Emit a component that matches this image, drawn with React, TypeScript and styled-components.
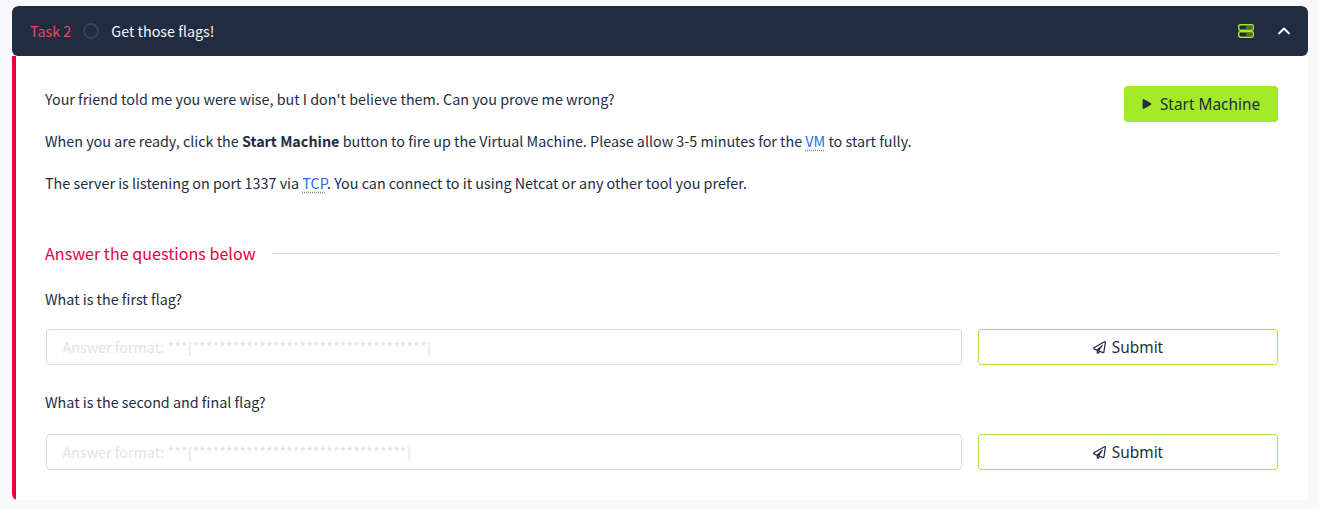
import React from 'react';
import styled, { createGlobalStyle } from 'styled-components';
import { FaPlay, FaRegPaperPlane } from 'react-icons/fa';
import { ChevronUp } from 'lucide-react';

const textFont = '"Noto Sans CJK JP", "Noto Sans", sans-serif';
const buttonFont = '"Noto Sans", "Open Sans", sans-serif';

const GlobalStyle = createGlobalStyle`
  html, body {
    margin: 0;
    background: #f9f9fb;
    font-family: ${textFont};
    color: #212c42;
  }
  * { box-sizing: border-box; }
`;

const questions = [
  { label: 'What is the first flag?', placeholder: 'Answer format: ***{***********************************}' },
  { label: 'What is the second and final flag?', placeholder: 'Answer format: ***{********************************}' },
];

export default function App() {
  return (
    <>
      <GlobalStyle />
      <Page>
        <Card>
          <Header>
            <TaskNo>Task 2</TaskNo>
            <StatusRing />
            <TaskTitle>Get those flags!</TaskTitle>
            <HeaderIcons>
              <ServerIcon />
              <ChevronUp size={20} color="#fff" strokeWidth={2.2} />
            </HeaderIcons>
          </Header>
          <Body>
            <Intro>
              <StartButton>
                <FaPlay size={10} />
                Start Machine
              </StartButton>
              <Para>Your friend told me you were wise, but I don't believe them. Can you prove me wrong?</Para>
              <Para>
                When you are ready, click the <strong>Start Machine</strong> button to fire up the Virtual Machine. Please allow 3-5 minutes for the <Abbr>VM</Abbr> to start fully.
              </Para>
              <Para>
                The server is listening on port 1337 via <Abbr>TCP</Abbr>. You can connect to it using Netcat or any other tool you prefer.
              </Para>
            </Intro>
            <SectionHead>
              <SectionTitle>Answer the questions below</SectionTitle>
              <SectionRule />
            </SectionHead>
            {questions.map((q) => (
              <Question key={q.label}>
                <QuestionLabel>{q.label}</QuestionLabel>
                <AnswerRow>
                  <AnswerInput placeholder={q.placeholder} />
                  <SubmitButton>
                    <FaRegPaperPlane size={13} />
                    Submit
                  </SubmitButton>
                </AnswerRow>
              </Question>
            ))}
          </Body>
        </Card>
      </Page>
    </>
  );
}

function ServerIcon() {
  return (
    <svg width="16" height="14" viewBox="0 0 16 14" fill="none">
      <rect x="0.7" y="0.7" width="14.6" height="5.6" rx="1.5" fill="#212c42" stroke="#a3ea2a" strokeWidth="1.4" />
      <rect x="8" y="2" width="6" height="3" fill="#566b3a" />
      <rect x="0.7" y="7.7" width="14.6" height="5.6" rx="1.5" fill="#212c42" stroke="#a3ea2a" strokeWidth="1.4" />
      <rect x="8" y="9" width="6" height="3" fill="#566b3a" />
    </svg>
  );
}

const Page = styled.div`
  padding: 6px 11px 9px 12px;
`;

const Card = styled.div`
  background: #fff;
  border-radius: 6px;
  height: 494px;
  display: flex;
  flex-direction: column;
  overflow: hidden;
`;

const Header = styled.div`
  height: 50px;
  background: #212c42;
  border-radius: 6px;
  display: flex;
  align-items: center;
  padding: 0 14px 0 18px;
  font-size: 14.34px;
  line-height: 48px;
  flex: none;
`;

const TaskNo = styled.span`
  color: #e84a5f;
`;

const StatusRing = styled.span`
  width: 16px;
  height: 16px;
  border-radius: 50%;
  border: 2px solid #36435a;
  margin: 0 12px;
`;

const TaskTitle = styled.span`
  color: #f5f7fb;
`;

const HeaderIcons = styled.div`
  margin-left: auto;
  display: flex;
  align-items: center;
  gap: 20px;
`;

const Body = styled.div`
  flex: 1;
  border-left: 4px solid #e8003c;
  padding: 30px 30px 0 29px;
  font-size: 14.34px;
`;

const Intro = styled.div`
  height: 130px;
  padding-top: 1px;
`;

const Para = styled.p`
  margin: 0 0 18px;
  line-height: 24px;
`;

const Abbr = styled.span`
  color: #2a6ae8;
  text-decoration: underline dotted #7a8aa5;
  text-underline-offset: 3px;
`;

const StartButton = styled.button`
  float: right;
  margin-top: -1px;
  width: 154px;
  height: 36px;
  background: #a3ea2a;
  border: 0;
  border-radius: 4px;
  display: flex;
  align-items: center;
  justify-content: center;
  gap: 8px;
  font-family: ${buttonFont};
  font-size: 15.4px;
  color: #212c42;
`;

const SectionHead = styled.div`
  display: flex;
  align-items: center;
  gap: 16px;
  height: 24px;
  margin-top: 25px;
`;

const SectionTitle = styled.div`
  color: #e8003c;
  font-size: 16.14px;
`;

const SectionRule = styled.div`
  flex: 1;
  height: 1px;
  background: #d8dadf;
  margin-top: 1px;
`;

const QuestionLabel = styled.div`
  line-height: 24px;
  margin-bottom: 18px;
`;

const Question = styled.div`
  margin-top: 22px;
  & + & {
    margin-top: 25px;
  }
  & + & ${QuestionLabel} {
    margin-bottom: 20px;
  }
`;

const AnswerRow = styled.div`
  display: flex;
  gap: 16px;
`;

const AnswerInput = styled.input`
  flex: 1;
  height: 36px;
  margin-left: 1px;
  border: 1px solid #d5dae3;
  border-radius: 4px;
  padding: 0 16px 2px 15.5px;
  font-family: ${textFont};
  font-size: 14.34px;
  &::placeholder {
    color: #dfe3ea;
  }
`;

const SubmitButton = styled.button`
  width: 300px;
  height: 36px;
  background: #fff;
  border: 1px solid #a3ea2a;
  border-radius: 4px;
  display: flex;
  align-items: center;
  justify-content: center;
  gap: 6px;
  font-family: ${buttonFont};
  font-size: 15.4px;
  color: #212c42;
`;
